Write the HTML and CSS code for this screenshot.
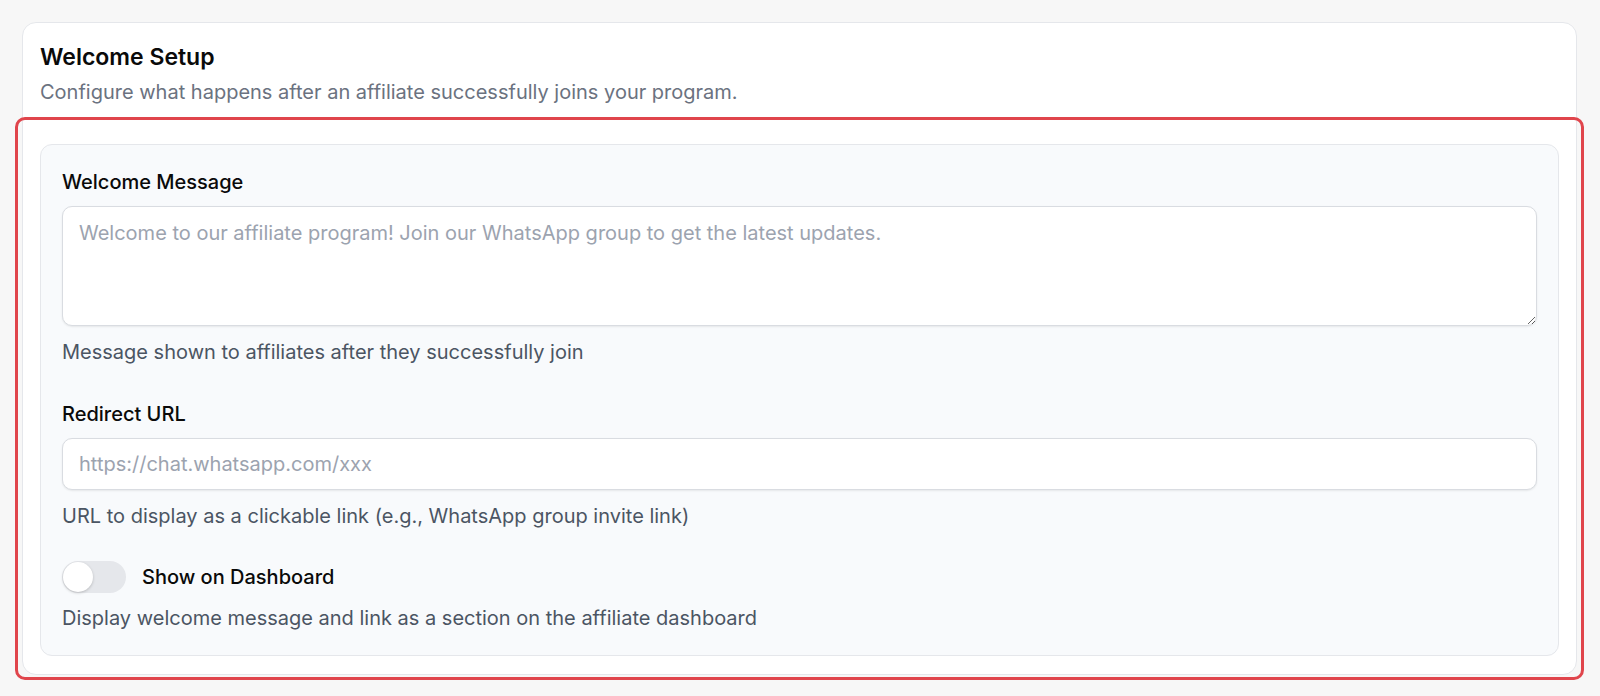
FILE: index.html
```html
<!DOCTYPE html>
<html lang="en">
<head>
  <meta charset="UTF-8">
  <meta name="viewport" content="width=device-width, initial-scale=1.0">
  <title>Welcome Setup</title>
  <link rel="stylesheet" href="styles.css">
</head>
<body>
  <!-- Welcome setup card -->
  <div class="card">
    <h2 class="card-title">Welcome Setup</h2>
    <p class="card-desc">Configure what happens after an affiliate successfully joins your program.</p>

    <div class="panel">
      <div class="field">
        <label class="field-label" for="welcomeMessage">Welcome Message</label>
        <textarea id="welcomeMessage" class="textarea" placeholder="Welcome to our affiliate program! Join our WhatsApp group to get the latest updates."></textarea>
        <p class="field-help">Message shown to affiliates after they successfully join</p>
      </div>

      <div class="field">
        <label class="field-label" for="redirectUrl">Redirect URL</label>
        <input type="text" id="redirectUrl" class="input" placeholder="https://chat.whatsapp.com/xxx">
        <p class="field-help">URL to display as a clickable link (e.g., WhatsApp group invite link)</p>
      </div>

      <div class="field">
        <div class="switch-row">
          <button class="switch" id="showOnDashboard" role="switch" aria-checked="false"><span class="switch-knob"></span></button>
          <label class="switch-label" for="showOnDashboard">Show on Dashboard</label>
        </div>
        <p class="field-help">Display welcome message and link as a section on the affiliate dashboard</p>
      </div>
    </div>
  </div>

  <!-- highlight around the section -->
  <div class="highlight"></div>
</body>
</html>
```

FILE: styles.css
```css
* {
  box-sizing: border-box;
}
body {
  font-family: Inter, "Noto Sans", sans-serif;
  margin: 0;
  padding: 22px 23px 0 22px;
  background-color: #f7f7f7;
  color: #0a0a0a;
}
.card {
  background: white;
  border: 1px solid #e5e7eb;
  border-radius: 14px;
  padding: 18px 17px 18px 17px;
}
.card-title {
  font-size: 23px;
  font-weight: 600;
  line-height: 32px;
  margin: 0;
}
.card-desc {
  font-size: 20px;
  line-height: 28px;
  color: #6b7280;
  margin: 5px 0 0 0;
}
.panel {
  margin-top: 38px;
  background: #f8fafc;
  border: 1px solid #e5e7eb;
  border-radius: 12px;
  padding: 23px 21px 23px 21px;
  display: flex;
  flex-direction: column;
  gap: 34px;
}
.field {
  display: flex;
  flex-direction: column;
}
.field-label {
  font-size: 20px;
  font-weight: 500;
  line-height: 28px;
  margin-bottom: 10px;
}
.textarea, .input {
  width: 100%;
  font-family: inherit;
  font-size: 20px;
  color: #111;
  background: white;
  border: 1px solid #d9dce1;
  border-radius: 10px;
  box-shadow: 0 1px 2px rgba(0, 0, 0, 0.08);
  padding: 12px 16px;
  outline: none;
}
.textarea {
  height: 120px;
  line-height: 28px;
  resize: vertical;
}
.input {
  height: 52px;
  line-height: 28px;
}
.textarea::placeholder, .input::placeholder {
  color: #9ca3af;
}
.field-help {
  font-size: 20px;
  line-height: 28px;
  color: #4b5563;
  margin: 12px 0 0 0;
}
.switch-row {
  display: flex;
  align-items: center;
  gap: 16px;
  margin-top: -3px;
}
.switch {
  width: 64px;
  height: 32px;
  border: none;
  border-radius: 16px;
  background: #e5e7eb;
  padding: 1px;
  display: flex;
  align-items: center;
  cursor: pointer;
}
.switch-knob {
  width: 30px;
  height: 30px;
  border-radius: 50%;
  background: white;
  box-shadow: 0 1px 3px rgba(0, 0, 0, 0.2);
}
.switch-label {
  font-size: 20px;
  font-weight: 500;
  line-height: 28px;
}
.switch-row + .field-help {
  margin-top: 11px;
}
.highlight {
  position: absolute;
  left: 15px;
  top: 117px;
  width: 1569px;
  height: 563px;
  border: 3px solid #e0454c;
  border-radius: 10px;
  pointer-events: none;
}
```
